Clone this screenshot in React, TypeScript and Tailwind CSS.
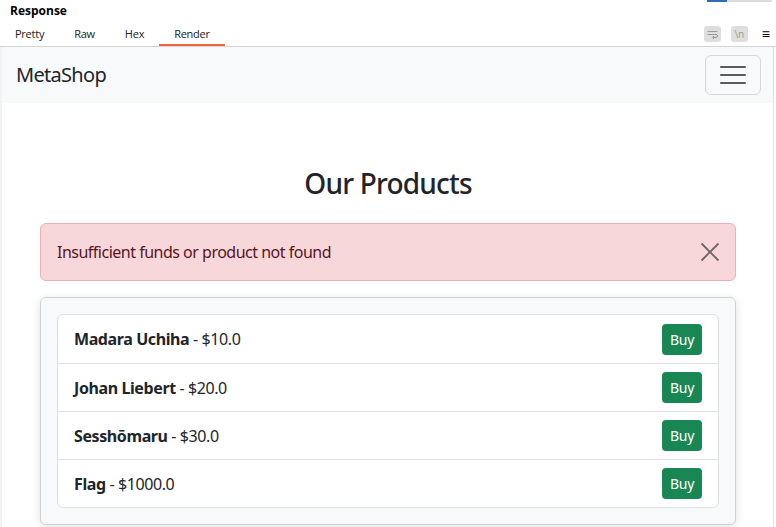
const products = [
  { name: "Madara Uchiha", price: "$10.0" },
  { name: "Johan Liebert", price: "$20.0" },
  { name: "Sesshōmaru", price: "$30.0" },
  { name: "Flag", price: "$1000.0" },
];

const tabs = ["Pretty", "Raw", "Hex", "Render"];

export default function App() {
  return (
    <div
      className="w-[776px] h-[527px] overflow-hidden bg-white"
      style={{ fontFamily: "'Open Sans', 'Noto Sans', sans-serif" }}
    >
      {/* burp response header */}
      <div className="relative h-[47px] border-b border-[#d4d4d4]">
        <div className="absolute top-0 right-[4px] flex h-[2px]">
          <div className="w-[20px] bg-[#2c6db5]" />
          <div className="w-[45px] bg-[#dcdcdc]" />
        </div>
        <div className="pl-[10px] pt-[2px] text-[12px] font-bold text-black leading-[18px]">
          Response
        </div>
        <div className="flex items-end justify-between pr-[6px]">
          <div className="flex">
            {tabs.map((t) => (
              <div
                key={t}
                className={`px-[15px] pt-[6px] pb-[2px] text-[11px] tracking-[-0.25px] leading-[16px] text-[#222] border-b-2 ${
                  t === "Render" ? "border-[#f2643a]" : "border-transparent"
                }`}
              >
                {t}
              </div>
            ))}
          </div>
          <div className="flex items-center gap-[10px] pb-[4px]">
            <div className="w-[17px] h-[16px] rounded-[3px] bg-[#dedede] flex items-center justify-center">
              <svg width="11" height="9" viewBox="0 0 11 9" fill="none" stroke="#9a9a9a" strokeWidth="1">
                <path d="M0.5 1.5h10M0.5 4.5h8.5a1.5 1.5 0 0 1 0 3H6M7 6l-1.5 1.5L7 9" />
              </svg>
            </div>
            <div className="w-[17px] h-[16px] rounded-[3px] bg-[#dedede] flex items-center justify-center text-[10px] leading-none text-[#9a9a9a]">
              \n
            </div>
            <div className="ml-[4px] text-[14px] leading-none text-black">≡</div>
          </div>
        </div>
      </div>

      {/* rendered page */}
      <div className="flex h-[480px]">
        <div className="w-[2px] bg-[#f1f2f3]" />
        <div
          className="flex-1 bg-white text-[#212529]"
          style={{ fontFamily: "'Noto Sans', 'Open Sans', sans-serif" }}
        >
          <nav className="bg-[#f8f9fa] h-[56px] flex items-center justify-between pl-[14px] pr-[12px]">
            <span className="text-[20px] tracking-[-0.7px] text-[#212529]">MetaShop</span>
            <button className="w-[56px] h-[40px] border border-[#d6d8da] rounded-[6px] flex items-center justify-center">
              <svg width="26" height="20" viewBox="0 0 26 20" stroke="#5a5c5e" strokeWidth="2" strokeLinecap="round">
                <path d="M1 2h24M1 10h24M1 18h24" />
              </svg>
            </button>
          </nav>

          <div className="pl-[38px] pr-[37px] pt-[63px]">
            <h2 className="text-center text-[28px] font-medium tracking-[-0.8px] leading-[34px] mb-[23px]">
              Our Products
            </h2>

            <div className="flex items-center justify-between bg-[#f8d7da] border border-[#f1aeb5] rounded-[6px] px-[16px] py-[16px] mb-[16px] text-[#58151c]">
              <span className="text-[16px] tracking-[-0.5px] leading-[24px]">
                Insufficient funds or product not found
              </span>
              <svg width="20" height="20" viewBox="0 0 20 20" stroke="#6f6466" strokeWidth="1.8" className="mr-[-1px]">
                <path d="M1.5 1.5l17 17M18.5 1.5l-17 17" />
              </svg>
            </div>

            <div className="bg-[#f8f9fa] border border-[#cfd1d3] rounded-[6px] p-[16px] shadow-[0_2px_10px_rgba(0,0,0,0.12)]">
              <ul className="bg-white border border-[#dee2e6] rounded-[6px]">
                {products.map((p, i) => (
                  <li
                    key={p.name}
                    className={`flex items-center justify-between h-[48px] px-[16px] text-[16px] tracking-[-0.4px] ${
                      i > 0 ? "border-t border-[#dee2e6]" : ""
                    }`}
                  >
                    <span>
                      <strong className="font-bold">{p.name}</strong> - {p.price}
                    </span>
                    <button className="bg-[#198754] text-white text-[14px] tracking-[-0.3px] leading-[21px] px-[8px] py-[5px] rounded-[4px]">
                      Buy
                    </button>
                  </li>
                ))}
              </ul>
            </div>
          </div>
        </div>
        <div className="w-[3px] border-l border-[#e2e2e2] bg-white" />
      </div>
    </div>
  );
}
